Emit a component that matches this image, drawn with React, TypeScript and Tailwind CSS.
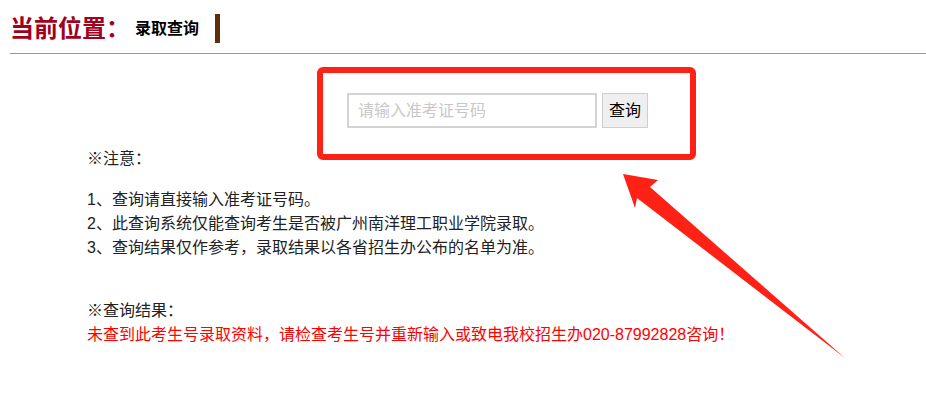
import { useState } from "react";

const notes = [
  "1、查询请直接输入准考证号码。",
  "2、此查询系统仅能查询考生是否被广州南洋理工职业学院录取。",
  "3、查询结果仅作参考，录取结果以各省招生办公布的名单为准。",
];

const App = () => {
  const [ticket, setTicket] = useState("");

  return (
    <div
      className="relative w-[926px] h-[401px] bg-white overflow-hidden text-black"
      style={{ fontFamily: '"Liberation Sans", "Noto Sans CJK SC", sans-serif' }}
    >
      <div className="pl-[10px]">
        {/* breadcrumb */}
        <div className="flex items-center h-[53px] pt-[4px]">
          <span className="text-[24px] leading-[28px] font-bold text-[#a3001b]">当前位置：</span>
          <span className="ml-[5px] text-[16px] leading-[20px] font-bold">录取查询</span>
          <span className="ml-[16px] w-[5px] h-[29px] bg-[#5e2f06]"></span>
        </div>
        <div className="h-px bg-[#999]"></div>

        {/* search form */}
        <div className="flex items-center gap-[5px] ml-[337px] mt-[39px]">
          <input
            value={ticket}
            onChange={(e) => setTicket(e.target.value)}
            placeholder="请输入准考证号码"
            className="w-[250px] h-[35px] border-2 border-[#d3d3d3] px-[9px] text-[16px] outline-none placeholder:text-[#c8c8c8]"
          />
          <button className="w-[46px] h-[35px] border border-[#cfcfcf] bg-[#efefef] text-[16px]">
            查询
          </button>
        </div>

        {/* notes */}
        <div className="ml-[77px] mt-[19px] text-[16px] leading-[24px] text-[#222]">
          <p>※注意：</p>
          <div className="mt-[17px]">
            {notes.map((n) => (
              <p key={n}>{n}</p>
            ))}
          </div>
          <p className="mt-[39px]">※查询结果：</p>
          <p className="text-[#ff0000]">
            未查到此考生号录取资料，请检查考生号并重新输入或致电我校招生办020-87992828咨询！
          </p>
        </div>
      </div>

      {/* annotation overlay */}
      <div className="absolute left-[317px] top-[67px] w-[379px] h-[93px] border-[6px] border-[#fe2116] rounded-[6px] pointer-events-none"></div>
      <svg
        className="absolute left-0 top-0 pointer-events-none"
        width="926"
        height="401"
        viewBox="0 0 926 401"
      >
        <polygon
          points="623,174 658,180 650,187 845,358 637,198 635,208"
          fill="#fe2116"
        />
      </svg>
    </div>
  );
};

export default App;
